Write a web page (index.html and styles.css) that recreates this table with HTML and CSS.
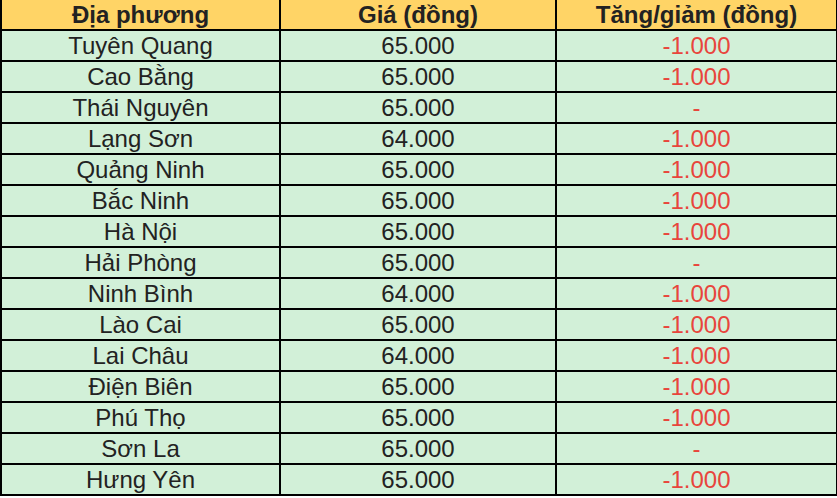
FILE: index.html
```html
<!DOCTYPE html>
<html lang="vi">
<head>
<meta charset="utf-8">
<link rel="stylesheet" href="styles.css">
</head>
<body>
<table class="price-table">
  <colgroup><col class="c1"><col class="c2"><col class="c3"></colgroup>
  <thead>
    <tr><th>Địa phương</th><th>Giá (đồng)</th><th>Tăng/giảm (đồng)</th></tr>
  </thead>
  <tbody>
    <tr><td>Tuyên Quang</td><td>65.000</td><td class="chg">-1.000</td></tr>
    <tr><td>Cao Bằng</td><td>65.000</td><td class="chg">-1.000</td></tr>
    <tr><td>Thái Nguyên</td><td>65.000</td><td class="chg">-</td></tr>
    <tr><td>Lạng Sơn</td><td>64.000</td><td class="chg">-1.000</td></tr>
    <tr><td>Quảng Ninh</td><td>65.000</td><td class="chg">-1.000</td></tr>
    <tr><td>Bắc Ninh</td><td>65.000</td><td class="chg">-1.000</td></tr>
    <tr><td>Hà Nội</td><td>65.000</td><td class="chg">-1.000</td></tr>
    <tr><td>Hải Phòng</td><td>65.000</td><td class="chg">-</td></tr>
    <tr><td>Ninh Bình</td><td>64.000</td><td class="chg">-1.000</td></tr>
    <tr><td>Lào Cai</td><td>65.000</td><td class="chg">-1.000</td></tr>
    <tr><td>Lai Châu</td><td>64.000</td><td class="chg">-1.000</td></tr>
    <tr><td>Điện Biên</td><td>65.000</td><td class="chg">-1.000</td></tr>
    <tr><td>Phú Thọ</td><td>65.000</td><td class="chg">-1.000</td></tr>
    <tr><td>Sơn La</td><td>65.000</td><td class="chg">-</td></tr>
    <tr><td>Hưng Yên</td><td>65.000</td><td class="chg">-1.000</td></tr>
  </tbody>
</table>
</body>
</html>
```
FILE: styles.css
```css
html, body {
  margin: 0;
  padding: 0;
  background: #ffffff;
}
.price-table {
  border-collapse: collapse;
  table-layout: fixed;
  width: 836px;
  font-family: "Liberation Sans", Arial, sans-serif;
  font-size: 24px;
  color: #222222;
}
.c1 { width: 279px; }
.c2 { width: 276px; }
.c3 { width: 281px; }
.price-table th,
.price-table td {
  border: 2px solid #000;
  text-align: center;
  padding: 0;
  line-height: 27px;
  overflow: hidden;
  white-space: nowrap;
}
.price-table thead th {
  border-top: none;
}
.price-table th {
  background: #ffd466;
  font-weight: bold;
  height: 29px;
}
.price-table td {
  background: #d2f0d8;
  height: 29px;
}
.price-table td.chg {
  color: #e8453c;
}
```
